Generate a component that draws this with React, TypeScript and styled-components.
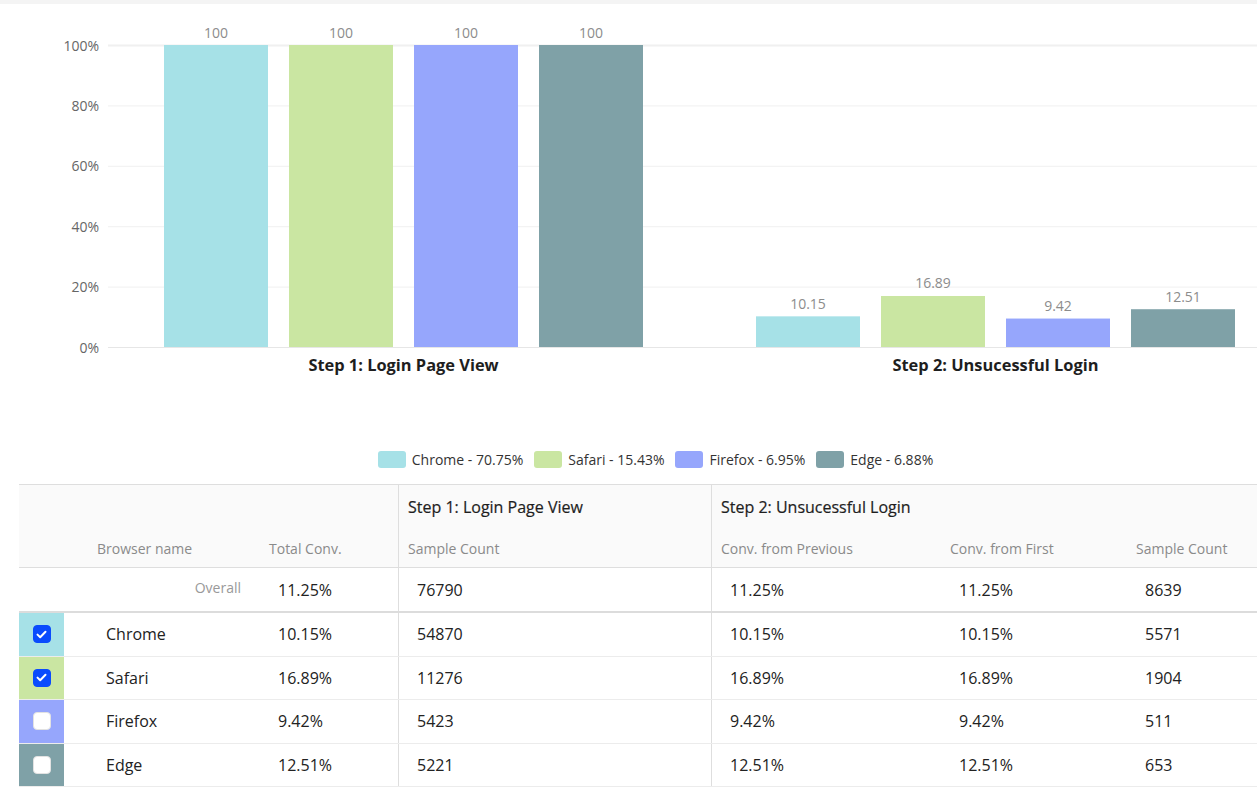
import React from "react";
import styled, { createGlobalStyle } from "styled-components";

const GlobalStyle = createGlobalStyle`
  html, body { margin: 0; padding: 0; background: #ffffff; overflow: hidden; }
  body { font-family: "Open Sans", "Noto Sans", sans-serif; color: #222; }
`;

type Browser = {
  name: string;
  color: string;
  share: string;
  checked: boolean;
  total: string;
  s1: string;
  prev: string;
  first: string;
  s2: string;
  v2: number;
};

const browsers: Browser[] = [
  { name: "Chrome", color: "#a6e1e7", share: "70.75%", checked: true, total: "10.15%", s1: "54870", prev: "10.15%", first: "10.15%", s2: "5571", v2: 10.15 },
  { name: "Safari", color: "#cae6a2", share: "15.43%", checked: true, total: "16.89%", s1: "11276", prev: "16.89%", first: "16.89%", s2: "1904", v2: 16.89 },
  { name: "Firefox", color: "#96a6fc", share: "6.95%", checked: false, total: "9.42%", s1: "5423", prev: "9.42%", first: "9.42%", s2: "511", v2: 9.42 },
  { name: "Edge", color: "#7fa1a7", share: "6.88%", checked: false, total: "12.51%", s1: "5221", prev: "12.51%", first: "12.51%", s2: "653", v2: 12.51 },
];

const Page = styled.div`
  width: 1292px;
  display: flex;
  flex-direction: column;
`;

const TopBand = styled.div`
  height: 4px;
  background: #f4f4f4;
`;

const ChartSvg = styled.svg`
  display: block;
  font-family: "Open Sans", "Noto Sans", sans-serif;
`;

const Section = styled.div`
  margin-left: 19px;
  width: 1273px;
  display: flex;
  flex-direction: column;
`;

const Legend = styled.div`
  height: 40px;
  margin-bottom: 4px;
  padding-bottom: 2px;
  box-sizing: border-box;
  display: flex;
  align-items: center;
  justify-content: center;
  gap: 11px;
`;

const LegendItem = styled.div`
  display: flex;
  align-items: center;
  gap: 6px;
  font-size: 14px;
  color: #333;
`;

const Swatch = styled.span<{ $color: string }>`
  width: 28px;
  height: 17px;
  border-radius: 3px;
  background: ${(p) => p.$color};
`;

const COLS = "45px 195px 139px 313px 229px 185px 167px";

const Header = styled.div`
  display: grid;
  grid-template-columns: ${COLS};
  grid-template-rows: 44px 38px;
  background: #fafafa;
  border-top: 1px solid #dedede;
  border-bottom: 1px solid #dedede;
`;

const HeadCell = styled.div<{ $col: string; $row: string; $divider?: boolean; $pad?: number }>`
  grid-column: ${(p) => p.$col};
  grid-row: ${(p) => p.$row};
  display: flex;
  align-items: center;
  padding-left: ${(p) => (p.$pad ?? 10) - (p.$divider ? 1 : 0)}px;
  border-left: ${(p) => (p.$divider ? "1px solid #dedede" : "none")};
`;

const GroupTitle = styled.span`
  font-size: 16px;
  font-weight: 500;
  color: #1e1e1e;
  -webkit-text-stroke: 0.2px #1e1e1e;
`;

const SubTitle = styled.span`
  font-size: 14px;
  color: #8a8a8a;
`;

const Row = styled.div<{ $overall?: boolean }>`
  display: grid;
  grid-template-columns: ${COLS};
  height: ${(p) => (p.$overall ? 45 : 43.6)}px;
  box-sizing: border-box;
  border-bottom: ${(p) => (p.$overall ? "2px solid #dcdcdc" : "1px solid #ececec")};
`;

const Cell = styled.div<{ $divider?: boolean; $pad?: number }>`
  display: flex;
  align-items: center;
  padding-left: ${(p) => (p.$pad ?? 19) - (p.$divider ? 1 : 0)}px;
  border-left: ${(p) => (p.$divider ? "1px solid #dedede" : "none")};
  font-size: 16px;
  color: #222;
`;

const OverallLabel = styled.div`
  grid-column: 1 / 3;
  display: flex;
  align-items: center;
  justify-content: flex-end;
  padding-right: 18px;
  padding-bottom: 4px;
  font-size: 14px;
  color: #999;
`;

const ColorCell = styled.div<{ $color: string }>`
  background: ${(p) => p.$color};
  display: flex;
  align-items: center;
  justify-content: center;
`;

const Check = styled.span<{ $checked: boolean }>`
  width: 18px;
  height: 18px;
  box-sizing: border-box;
  border-radius: 4px;
  background: ${(p) => (p.$checked ? "#0a4bfd" : "#ffffff")};
  border: 1px solid ${(p) => (p.$checked ? "#0a4bfd" : "#e2e2e2")};
  display: flex;
  align-items: center;
  justify-content: center;
`;

const PLOT_LEFT = 108;
const PLOT_RIGHT = 1292;
const Y0 = 343; // 0% line (page y 347 minus band 4)
const Y100 = 41; // 100% line
const H = Y0 - Y100;
const BAR_W = 104;
const STEP = 125;

function Chart() {
  const ticks = [0, 20, 40, 60, 80, 100];
  const groups = [
    { start: 164, label: "Step 1: Login Page View", values: browsers.map(() => 100) },
    { start: 756, label: "Step 2: Unsucessful Login", values: browsers.map((b) => b.v2) },
  ];
  return (
    <ChartSvg width={1292} height={436} viewBox="0 0 1292 436">
      {ticks.map((t) => {
        const y = Y0 - (t / 100) * H;
        return (
          <g key={t}>
            <line x1={PLOT_LEFT} x2={PLOT_RIGHT} y1={y + 0.5} y2={y + 0.5} stroke={t === 0 ? "#e6e6e6" : "#f0f0f0"} strokeWidth={t === 100 ? 2 : 1} />
            <text x={99} y={y} textAnchor="end" dominantBaseline="central" fontSize={14} fill="#666">
              {t}%
            </text>
          </g>
        );
      })}
      {groups.map((g) => (
        <g key={g.label}>
          {g.values.map((v, i) => {
            const h = (v / 100) * H;
            const x = g.start + i * STEP;
            const label = v === 100 ? "100" : v.toFixed(2);
            return (
              <g key={i}>
                <rect x={x} y={Y0 - h} width={BAR_W} height={h} fill={browsers[i].color} />
                <text x={x + BAR_W / 2} y={Y0 - h - 13} textAnchor="middle" dominantBaseline="central" fontSize={14} fill="#8c8c8c">
                  {label}
                </text>
              </g>
            );
          })}
          <text
            x={g.start + (3 * STEP + BAR_W) / 2}
            y={360}
            textAnchor="middle"
            dominantBaseline="central"
            fontSize={16.4}
            fontWeight={700}
            fill="#1e1e1e"
          >
            {g.label}
          </text>
        </g>
      ))}
    </ChartSvg>
  );
}

function CheckMark() {
  return (
    <svg width="11" height="9" viewBox="0 0 11 9">
      <path d="M1.5 4.6 L4.2 7.2 L9.5 1.8" fill="none" stroke="#fff" strokeWidth="2" strokeLinecap="round" strokeLinejoin="round" />
    </svg>
  );
}

export default function App() {
  return (
    <Page>
      <GlobalStyle />
      <TopBand />
      <Chart />
      <Section>
        <Legend>
          {browsers.map((b) => (
            <LegendItem key={b.name}>
              <Swatch $color={b.color} />
              {b.name} - {b.share}
            </LegendItem>
          ))}
        </Legend>
        <Header>
          <HeadCell $col="1 / 4" $row="1" />
          <HeadCell $col="2" $row="2" $pad={33}>
            <SubTitle>Browser name</SubTitle>
          </HeadCell>
          <HeadCell $col="3" $row="2">
            <SubTitle>Total Conv.</SubTitle>
          </HeadCell>
          <HeadCell $col="4" $row="1" $divider>
            <GroupTitle>Step 1: Login Page View</GroupTitle>
          </HeadCell>
          <HeadCell $col="4" $row="2" $divider>
            <SubTitle>Sample Count</SubTitle>
          </HeadCell>
          <HeadCell $col="5 / 8" $row="1" $divider>
            <GroupTitle>Step 2: Unsucessful Login</GroupTitle>
          </HeadCell>
          <HeadCell $col="5" $row="2" $divider>
            <SubTitle>Conv. from Previous</SubTitle>
          </HeadCell>
          <HeadCell $col="6" $row="2">
            <SubTitle>Conv. from First</SubTitle>
          </HeadCell>
          <HeadCell $col="7" $row="2" $pad={11}>
            <SubTitle>Sample Count</SubTitle>
          </HeadCell>
        </Header>
        <Row $overall>
          <OverallLabel>Overall</OverallLabel>
          <Cell>11.25%</Cell>
          <Cell $divider>76790</Cell>
          <Cell $divider>11.25%</Cell>
          <Cell>11.25%</Cell>
          <Cell $pad={20}>8639</Cell>
        </Row>
        {browsers.map((b) => (
          <Row key={b.name}>
            <ColorCell $color={b.color}>
              <Check $checked={b.checked}>{b.checked && <CheckMark />}</Check>
            </ColorCell>
            <Cell $pad={42}>{b.name}</Cell>
            <Cell>{b.total}</Cell>
            <Cell $divider>{b.s1}</Cell>
            <Cell $divider>{b.prev}</Cell>
            <Cell>{b.first}</Cell>
            <Cell $pad={20}>{b.s2}</Cell>
          </Row>
        ))}
      </Section>
    </Page>
  );
}
